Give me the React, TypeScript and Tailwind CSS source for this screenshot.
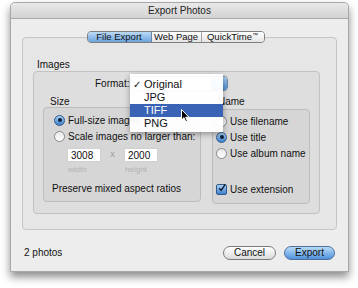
const sans = "font-['Liberation_Sans',Arial,sans-serif]"

function Radio({ on }: { on?: boolean }) {
  if (on) {
    return (
      <span className="w-[11px] h-[11px] shrink-0 rounded-full border border-[#35598a] bg-linear-to-b from-[#a9d0f3] to-[#3c7fcc] flex items-center justify-center">
        <span className="w-[4px] h-[4px] rounded-full bg-[#0e213b]" />
      </span>
    )
  }
  return (
    <span className="w-[11px] h-[11px] shrink-0 rounded-full border border-[#8a8a8a] bg-linear-to-b from-[#e9e9e9] to-white" />
  )
}

function Option({ label, on }: { label: string; on?: boolean }) {
  return (
    <div className="h-[16px] flex items-center gap-[3px]">
      <Radio on={on} />
      <span>{label}</span>
    </div>
  )
}

function Field({ value, caption }: { value: string; caption: string }) {
  return (
    <div className="flex flex-col">
      <div className="w-[34px] h-[14px] bg-white border border-[#d0d0d0] flex items-center pl-[3px] text-[10px]">
        {value}
      </div>
      <div className="mt-[3px] pl-[1px] text-[8px] text-[#b2b2b2] leading-[10px]">{caption}</div>
    </div>
  )
}

const menuItems = ["Original", "JPG", "TIFF", "PNG"]

export default function App() {
  return (
    <div className={`w-[358px] h-[288px] bg-white pt-[2px] pl-[10px] overflow-hidden text-[10px] text-[#111] ${sans}`}>
      <div className="w-[339px] h-[270px] flex flex-col rounded-t-[5px] bg-[#ededed] border border-[#a8a8a8] shadow-[0_5px_9px_rgba(0,0,0,0.45)]">
        {/* title bar */}
        <div className="h-[16px] shrink-0 rounded-t-[5px] bg-linear-to-b from-[#e9e9e9] to-[#d3d3d3] border-b border-[#a9a9a9] flex items-center justify-center text-[10px] text-[#222]">
          Export Photos
        </div>

        <div className="flex flex-col px-[11px]">
          {/* tabs */}
          <div className="mt-[12px] relative z-10 flex justify-center pr-[8px]">
            <div className="flex h-[12px] rounded-[4px] border border-[#7f7f7f] overflow-hidden text-[9.5px]">
              <div className="w-[64px] flex items-center justify-center bg-linear-to-b from-[#bcdaf5] to-[#6aa3dd] border-r border-[#6e86a6]">
                File Export
              </div>
              <div className="w-[50px] flex items-center justify-center bg-linear-to-b from-white to-[#e4e4e4] border-r border-[#a6a6a6]">
                Web Page
              </div>
              <div className="w-[62px] flex items-center justify-center bg-linear-to-b from-white to-[#e4e4e4]">
                QuickTime<span className="text-[6px] -mt-[4px]">™</span>
              </div>
            </div>
          </div>

          {/* outer group */}
          <div className="-mt-[6px] h-[193px] rounded-[4px] border border-[#c6c6c6] bg-[#e6e6e6] pl-[10px] pr-[16px] flex flex-col">
            <div className="mt-[21px] h-[11px] pl-[4px] leading-[11px]">Images</div>

            {/* images group */}
            <div className="mt-[1px] h-[143px] relative rounded-[4px] border border-[#c2c2c2] bg-[#dedede] flex flex-col">
              <div className="mt-[4px] h-[15px] flex items-center pl-[61px]">
                <span className="w-[35px]">Format:</span>
                <div className="w-[98px] h-[15px] rounded-[4px] border border-[#6b85a8] bg-white flex justify-end overflow-hidden">
                  <div className="w-[16px] bg-linear-to-b from-[#a9cff2] to-[#4a8ad4]" />
                </div>
              </div>

              <div className="mt-[5px] flex pl-[9px] gap-[11px]">
                {/* size */}
                <div className="flex flex-col">
                  <div className="h-[11px] leading-[11px] pl-[7px]">Size</div>
                  <div className="w-[158px] h-[95px] rounded-[4px] border border-[#bcbcbc] bg-[#d6d6d6] flex flex-col pl-[10px] pt-[4px]">
                    <Option label="Full-size images" on />
                    <Option label="Scale images no larger than:" />
                    <div className="mt-[4px] pl-[13px] flex items-start">
                      <Field value="3008" caption="width" />
                      <span className="w-[23px] h-[14px] flex items-center justify-center text-[9px] text-[#9a9a9a]">x</span>
                      <Field value="2000" caption="height" />
                    </div>
                    <div className="mt-[8px] -ml-[2px] h-[12px] leading-[12px]">Preserve mixed aspect ratios</div>
                  </div>
                </div>

                {/* name */}
                <div className="flex flex-col">
                  <div className="h-[11px] leading-[11px] pl-[6px]">Name</div>
                  <div className="mt-[2px] w-[98px] h-[95px] rounded-[4px] border border-[#bcbcbc] bg-[#d6d6d6] flex flex-col pl-[3px] pt-[3px]">
                    <Option label="Use filename" />
                    <Option label="Use title" on />
                    <Option label="Use album name" />
                    <div className="mt-[20px] h-[16px] flex items-center gap-[3px]">
                      <span className="w-[11px] h-[11px] shrink-0 rounded-[2px] border border-[#35598a] bg-linear-to-b from-[#a9d0f3] to-[#3c7fcc] flex items-center justify-center">
                        <svg width="10" height="10" viewBox="0 0 10 10" className="-mt-[2px] ml-[1px]">
                          <path d="M1.5 5.2 L4 8 L9 0.5" fill="none" stroke="#0d1d33" strokeWidth="1.8" />
                        </svg>
                      </span>
                      <span>Use extension</span>
                    </div>
                  </div>
                </div>
              </div>

              {/* popup menu */}
              <div className="absolute left-[96px] top-[2px] w-[93px] pt-[4px] pb-[2px] bg-white/95 shadow-[0_2px_6px_rgba(0,0,0,0.35)] text-[11px] text-[#111]">
                {menuItems.map((m) => (
                  <div
                    key={m}
                    className={`h-[13px] flex items-center pl-[14px] relative ${m === "TIFF" ? "bg-[#3a62b5] text-white" : ""}`}
                  >
                    {m === "Original" && <span className="absolute left-[3px] text-[10px]">✓</span>}
                    {m}
                  </div>
                ))}
              </div>

              {/* cursor */}
              <svg width="9" height="14" viewBox="0 0 9 14" className="absolute left-[147px] top-[37px]">
                <path d="M0.5 0.5 L0.5 11 L3 8.6 L4.8 12.8 L6.4 12.1 L4.7 8.2 L8 8.2 Z" fill="#000" stroke="#fff" strokeWidth="1" />
              </svg>
            </div>
          </div>

          {/* footer */}
          <div className="mt-[15px] h-[15px] flex items-center pl-[2px] pr-[2px]">
            <span className="flex-1">2 photos</span>
            <div className="w-[53px] h-[14px] rounded-full border border-[#7a7a7a] bg-linear-to-b from-white to-[#dcdcdc] flex items-center justify-center">
              Cancel
            </div>
            <div className="ml-[8px] w-[51px] h-[14px] rounded-full border border-[#4d6f9e] bg-linear-to-b from-[#b9dbf7] to-[#4f92dc] flex items-center justify-center">
              Export
            </div>
          </div>
        </div>
      </div>
    </div>
  )
}
